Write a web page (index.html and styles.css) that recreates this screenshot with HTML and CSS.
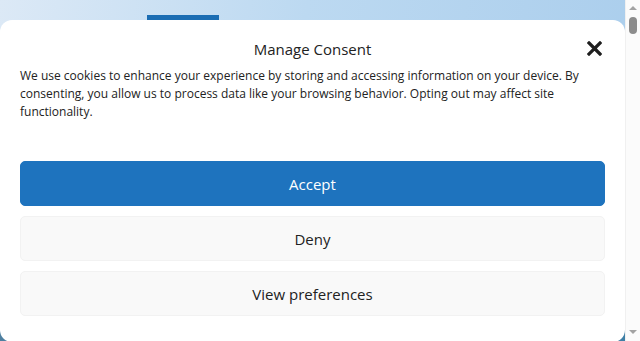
FILE: index.html
```html
<!DOCTYPE html>
<html lang="en">
<head>
  <meta charset="UTF-8">
  <meta name="viewport" content="width=device-width, initial-scale=1.0">
  <title>Manage Consent</title>
  <link rel="stylesheet" href="styles.css">
</head>
<body>
  <div class="page">
    <div class="site">
      <div class="site-bar"></div>

      <div class="consent">
        <div class="consent-header">
          <div class="consent-title">Manage Consent</div>
          <button type="button" class="consent-close" aria-label="Close">
            <svg width="15" height="15" viewBox="0 0 15 15">
              <path d="M2 2 L13 13 M13 2 L2 13" stroke="#1e1e1e" stroke-width="3.2" stroke-linecap="square"/>
            </svg>
          </button>
        </div>
        <p class="consent-message">We use cookies to enhance your experience by storing and accessing information on your device. By consenting, you allow us to process data like your browsing behavior. Opting out may affect site functionality.</p>

        <div class="consent-buttons">
          <button type="button" class="btn btn-accept">Accept</button>
          <button type="button" class="btn">Deny</button>
          <button type="button" class="btn">View preferences</button>
        </div>
      </div>
    </div>

    <div class="scrollbar">
      <span class="arrow arrow-up"></span>
      <span class="thumb"></span>
      <span class="track"></span>
      <span class="arrow arrow-down"></span>
    </div>
  </div>
</body>
</html>
```

FILE: styles.css
```css
* {
  margin: 0;
  padding: 0;
  box-sizing: border-box;
  font-family: 'Open Sans', sans-serif;
}
html, body {
  height: 100%;
  overflow: hidden;
}
.page {
  display: flex;
  height: 341px;
}
.site {
  flex: 1;
  background: linear-gradient(100deg, #dce9f6 0%, #bcd9f1 45%, #a9cdec 100%);
  overflow: hidden;
  position: relative;
}
.site::after {
  content: "";
  position: absolute;
  left: 0;
  right: 0;
  bottom: 0;
  height: 20px;
  background: linear-gradient(90deg, #4d7fa0, #3e7fa6);
}
.site-bar {
  width: 72px;
  height: 5px;
  margin: 15px 0 0 147px;
  background: #1b6db3;
}
.consent {
  position: relative;
  z-index: 1;
  width: 625px;
  height: 322px;
  background: #fff;
  border-radius: 12px;
  padding: 21px 20px 25px;
  color: #222;
}
.consent-header {
  display: flex;
  justify-content: center;
  align-items: center;
  position: relative;
  height: 17px;
}
.consent-title {
  font-size: 15px;
  line-height: 17px;
}
.consent-close {
  position: absolute;
  right: 3px;
  top: 0;
  border: none;
  background: none;
  display: flex;
}
.consent-message {
  margin-top: 9px;
  font-size: 12px;
  line-height: 18px;
}
.consent-buttons {
  display: flex;
  flex-direction: column;
  gap: 10px;
  margin-top: 40px;
}
.btn {
  height: 45px;
  border: 1px solid #f2f2f2;
  border-radius: 5px;
  background: #f9f9f9;
  color: #222;
  font-size: 15px;
}
.btn-accept {
  background: #1e73be;
  border-color: #1e73be;
  color: #fff;
}
.scrollbar {
  width: 15px;
  display: flex;
  flex-direction: column;
  align-items: center;
  background: #fbfbfb;
  border-left: 1px solid #f0f0f0;
}
.arrow {
  width: 0;
  height: 0;
  border-left: 4px solid transparent;
  border-right: 4px solid transparent;
}
.arrow-up {
  margin-top: 6px;
  border-bottom: 4px solid #a3a3a3;
}
.arrow-down {
  margin-bottom: 7px;
  border-top: 4px solid #a3a3a3;
}
.thumb {
  width: 8px;
  height: 17px;
  margin-top: 7px;
  border-radius: 4px;
  background: #8c8c8c;
}
.track {
  flex: 1;
}
```
